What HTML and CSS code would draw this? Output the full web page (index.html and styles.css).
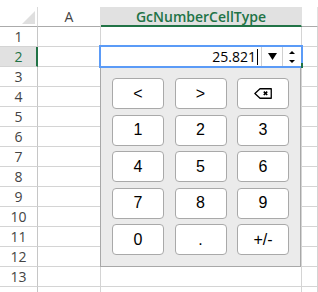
FILE: index.html
```html
<!DOCTYPE html>
<html lang="en">
<head>
  <meta charset="UTF-8">
  <title>GcNumberCellType</title>
  <link rel="stylesheet" href="styles.css">
</head>
<body>
  <div class="sheet">
    <!-- Grid -->
    <div class="grid">
      <div class="cell corner"><span class="tri"></span></div>
      <div class="cell col-head">A</div>
      <div class="cell col-head active">GcNumberCellType</div>
      <div class="cell col-head"></div>

      <div class="cell row-head">1</div><div class="cell"></div><div class="cell"></div><div class="cell"></div>
      <div class="cell row-head active">2</div><div class="cell"></div><div class="cell"></div><div class="cell"></div>
      <div class="cell row-head">3</div><div class="cell"></div><div class="cell"></div><div class="cell"></div>
      <div class="cell row-head">4</div><div class="cell"></div><div class="cell"></div><div class="cell"></div>
      <div class="cell row-head">5</div><div class="cell"></div><div class="cell"></div><div class="cell"></div>
      <div class="cell row-head">6</div><div class="cell"></div><div class="cell"></div><div class="cell"></div>
      <div class="cell row-head">7</div><div class="cell"></div><div class="cell"></div><div class="cell"></div>
      <div class="cell row-head">8</div><div class="cell"></div><div class="cell"></div><div class="cell"></div>
      <div class="cell row-head">9</div><div class="cell"></div><div class="cell"></div><div class="cell"></div>
      <div class="cell row-head">10</div><div class="cell"></div><div class="cell"></div><div class="cell"></div>
      <div class="cell row-head">11</div><div class="cell"></div><div class="cell"></div><div class="cell"></div>
      <div class="cell row-head">12</div><div class="cell"></div><div class="cell"></div><div class="cell"></div>
      <div class="cell row-head">13</div><div class="cell"></div><div class="cell"></div><div class="cell"></div>
      <div class="cell row-head"></div><div class="cell"></div><div class="cell"></div><div class="cell"></div>
    </div>

    <!-- Active cell editor -->
    <div class="editor">
      <div class="value">25.821<span class="caret"></span></div>
      <div class="drop">
        <svg width="9" height="7" viewBox="0 0 9 7"><polygon points="0,0 9,0 4.5,7" fill="#000"/></svg>
      </div>
      <div class="spin">
        <svg width="6" height="14" viewBox="0 0 6 14">
          <polygon points="3,1 6,4 0,4" fill="#000"/>
          <polygon points="0,10 6,10 3,13" fill="#000"/>
        </svg>
      </div>
    </div>
    <div class="fill-handle"></div>

    <!-- Number pad dropdown -->
    <div class="numpad">
      <button class="key">&lt;</button>
      <button class="key">&gt;</button>
      <button class="key">
        <svg width="18" height="11" viewBox="0 0 18 11">
          <path d="M6 0.75 H17.25 V10.25 H6 L0.9 5.5 Z" fill="none" stroke="#000" stroke-width="1.3" stroke-linejoin="round"/>
          <path d="M9.8 3.6 L13.2 7 M13.2 3.6 L9.8 7" stroke="#000" stroke-width="1.6"/>
        </svg>
      </button>
      <button class="key">1</button>
      <button class="key">2</button>
      <button class="key">3</button>
      <button class="key">4</button>
      <button class="key">5</button>
      <button class="key">6</button>
      <button class="key">7</button>
      <button class="key">8</button>
      <button class="key">9</button>
      <button class="key">0</button>
      <button class="key">.</button>
      <button class="key">+/-</button>
    </div>
  </div>
</body>
</html>
```

FILE: styles.css
```css
/* ===== Base ===== */
* {
  margin: 0;
  padding: 0;
  box-sizing: border-box;
}
html, body {
  width: 100%;
  height: 100%;
  background: #fff;
  font-family: "Open Sans", "Noto Sans", sans-serif;
  overflow: hidden;
}

/* ===== Sheet grid ===== */
.sheet {
  position: relative;
  height: 292px;
  overflow: hidden;
  padding-top: 7px;
}
.grid {
  display: grid;
  grid-template-columns: 38px 63px 201px 1fr;
  grid-auto-rows: 20px;
}
.cell {
  border-right: 1px solid #d4d4d4;
  border-bottom: 1px solid #d4d4d4;
}
.corner {
  display: flex;
  justify-content: flex-end;
  align-items: flex-end;
  padding: 0 2px 2px 0;
  border-bottom-color: #ababab;
  border-right-color: #dadada;
}
.corner .tri {
  width: 0;
  height: 0;
  border-left: 13px solid transparent;
  border-bottom: 13px solid #dfdfdf;
}
.col-head {
  display: flex;
  align-items: center;
  justify-content: center;
  font-size: 14px;
  color: #444;
  border-bottom-color: #ababab;
  border-right-color: #e1e1e1;
}
.col-head.active {
  background: #e1e1e1;
  color: #217346;
  font-weight: 600;
  font-size: 14px;
  border-bottom: 2px solid #217346;
  padding-top: 1px;
}
.row-head {
  display: flex;
  align-items: center;
  justify-content: center;
  font-size: 14px;
  color: #444;
  border-right-color: #c6c6c6;
}
.row-head.active {
  background: #e1e1e1;
  color: #217346;
  border-right: 2px solid #217346;
  padding-left: 1px;
}

/* ===== Editor ===== */
.editor {
  position: absolute;
  left: 99px;
  top: 45px;
  width: 204px;
  height: 23px;
  border: 2px solid #5b9bf7;
  background: #fff;
  display: flex;
  z-index: 3;
}
.editor .value {
  flex: 1;
  display: flex;
  align-items: center;
  justify-content: flex-end;
  padding-right: 3px;
  font-size: 14px;
  color: #000;
}
.editor .caret {
  display: inline-block;
  width: 1px;
  height: 16px;
  background: #000;
  margin-left: 1px;
}
.editor .drop {
  width: 21px;
  border-left: 1px solid #d0d0d0;
  display: flex;
  align-items: center;
  justify-content: center;
}
.editor .spin {
  width: 19px;
  border-left: 1px solid #d0d0d0;
  display: flex;
  align-items: center;
  justify-content: center;
}
.fill-handle {
  position: absolute;
  left: 301px;
  top: 63px;
  width: 2px;
  height: 5px;
  background: #217346;
  z-index: 4;
}

/* ===== Number pad ===== */
.numpad {
  position: absolute;
  left: 100px;
  top: 67px;
  width: 201px;
  height: 200px;
  background: #ebebeb;
  border: 1px solid #a8a8a8;
  padding: 10px 11px 11px 11px;
  display: grid;
  grid-template-columns: repeat(3, 1fr);
  grid-template-rows: repeat(5, 31px);
  column-gap: 10.5px;
  row-gap: 5.5px;
  z-index: 2;
}
.key {
  background: #fff;
  border: 1px solid #a9a9a9;
  border-radius: 4px;
  font-family: "Liberation Sans", Arial, sans-serif;
  font-size: 16px;
  color: #000;
  display: flex;
  align-items: center;
  justify-content: center;
}
```
